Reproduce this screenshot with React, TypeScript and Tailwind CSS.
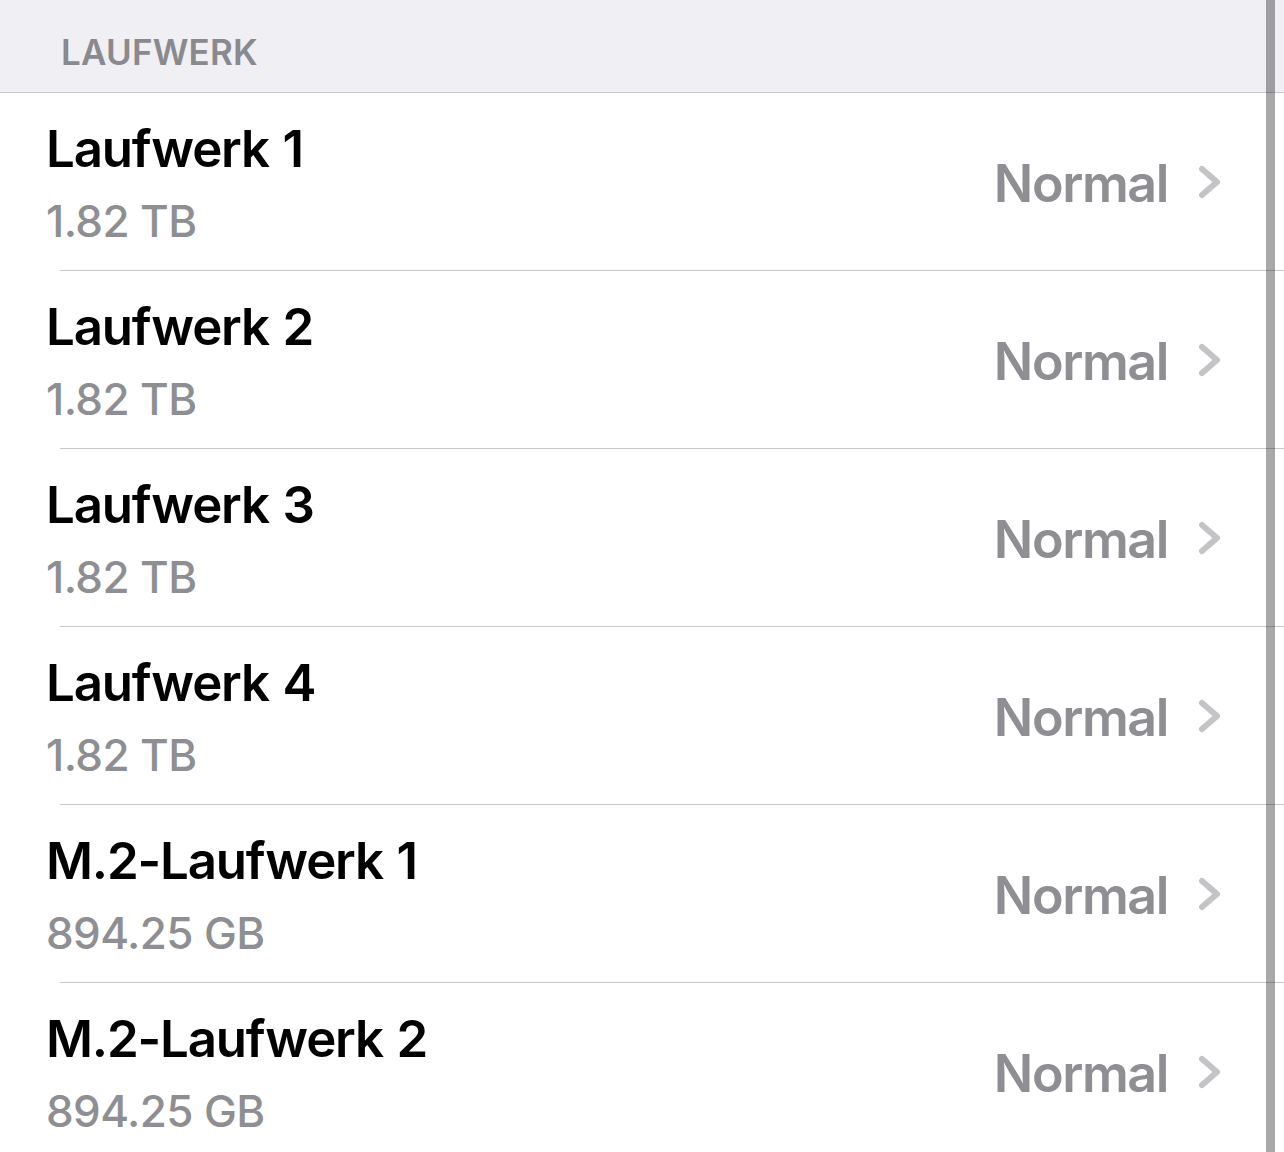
import React from "react";

const rows = [
  { name: "Laufwerk 1", size: "1.82 TB" },
  { name: "Laufwerk 2", size: "1.82 TB" },
  { name: "Laufwerk 3", size: "1.82 TB" },
  { name: "Laufwerk 4", size: "1.82 TB" },
  { name: "M.2-Laufwerk 1", size: "894.25 GB" },
  { name: "M.2-Laufwerk 2", size: "894.25 GB" },
];

function Chevron() {
  return (
    <svg width="24" height="34" viewBox="0 0 24 34" className="shrink-0 -mt-[4px]">
      <path
        d="M4 4 L19 17 L4 30"
        fill="none"
        stroke="#c4c4c7"
        strokeWidth="6"
        strokeLinecap="round"
        strokeLinejoin="round"
      />
    </svg>
  );
}

export default function App() {
  return (
    <div
      className="relative w-[1284px] h-[1152px] overflow-hidden bg-white"
      style={{ fontFamily: "Inter, 'Noto Sans', sans-serif" }}
    >
      <div className="h-[93px] bg-[#f0eff4] border-b border-[#c8c7cc] pl-[61px] pt-[30px]">
        <div className="text-[35px] leading-[44px] font-semibold text-[#8a8a8e] tracking-[0.2px]">
          LAUFWERK
        </div>
      </div>
      <div className="flex flex-col">
        {rows.map((r) => (
          <div key={r.name} className="pl-[60px]">
            <div className="flex items-center h-[178px] border-b border-[#c8c7cc] pr-[62px]">
              <div className="flex flex-col flex-1 -ml-[14px] pt-[2px]">
                <div className="text-[51px] leading-[60px] font-semibold text-black tracking-[-1.2px] [word-spacing:2px]">
                  {r.name}
                </div>
                <div className="mt-[16px] text-[44px] leading-[52px] font-medium text-[#8e8e93] tracking-[-0.6px]">
                  {r.size}
                </div>
              </div>
              <div className="flex items-center gap-[30px] pt-[4px]">
                <div className="text-[52px] leading-[60px] font-semibold text-[#8e8e93] tracking-[-1.4px]">
                  Normal
                </div>
                <Chevron />
              </div>
            </div>
          </div>
        ))}
      </div>
      <div className="absolute top-0 left-[1266px] w-[9px] h-[1152px] bg-black/[0.34]" />
    </div>
  );
}
